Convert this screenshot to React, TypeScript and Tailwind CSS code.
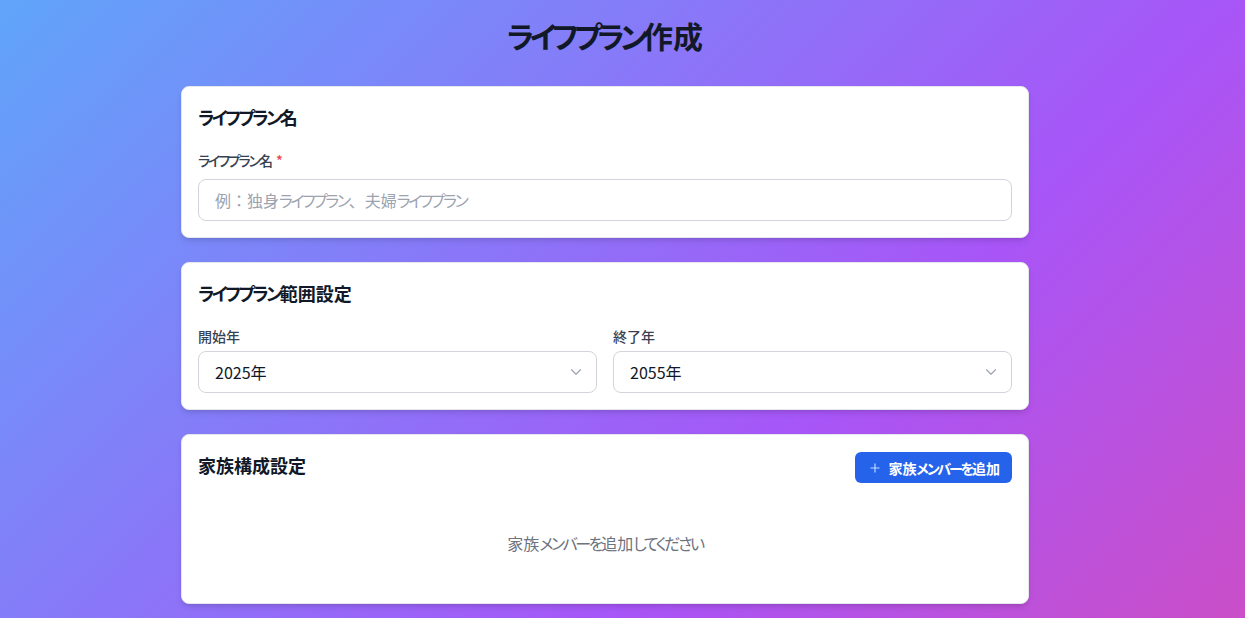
import React from "react";
import { ChevronDown, Plus } from "lucide-react";

const font = "font-['Noto_Sans_CJK_JP','Noto_Sans',sans-serif]";

function J({ t }: { t: string }) {
  const parts = t.split(/([\u3040-\u30FF]+)/);
  return (
    <>
      {parts.map((p, i) =>
        /[\u3040-\u30FF]/.test(p) ? (
          <span key={i} className="[font-feature-settings:'palt'] tracking-[-0.15em]">
            {p}
          </span>
        ) : (
          <React.Fragment key={i}>{p}</React.Fragment>
        )
      )}
    </>
  );
}

function Card({ children }: { children: React.ReactNode }) {
  return (
    <div className="rounded-lg border border-[#e5e7eb] bg-white p-4 shadow-md">
      {children}
    </div>
  );
}

function Select({ value }: { value: string }) {
  return (
    <div className="flex h-[42px] items-center justify-between rounded-lg border border-[#d1d5db] bg-white pl-4 pr-[11px]">
      <span className="text-base text-[#111827]">{value}</span>
      <ChevronDown size={18} strokeWidth={1.5} className="text-[#9ca3af]" />
    </div>
  );
}

export default function App() {
  return (
    <div
      className={`min-h-screen bg-[linear-gradient(to_bottom_right,#60a5fa,#a855f7,#ec4899)] bg-[length:100%_1236px] bg-no-repeat bg-[#a855f7] pr-[35px] pt-[17px] pb-6 ${font}`}
    >
      <div className="mx-auto max-w-[848px]">
        <h1 className="mb-[33px] text-center text-3xl font-bold leading-9 text-[#111827]">
          <J t="ライフプラン作成" />
        </h1>
        <div className="flex flex-col gap-6">
          <Card>
            <h2 className="mb-[19px] text-lg font-semibold leading-7 text-[#111827]">
              <J t="ライフプラン名" />
            </h2>
            <label className="mb-[9px] block text-sm font-medium leading-5 text-[#374151]">
              <J t="ライフプラン名" /> <span className="text-[#ef4444]">*</span>
            </label>
            <div className="flex h-[42px] items-center rounded-lg border border-[#d1d5db] px-4">
              <span className="text-base text-[#9ca3af]">
                <J t="例：独身ライフプラン、夫婦ライフプラン" />
              </span>
            </div>
          </Card>

          <Card>
            <h2 className="mb-[19px] text-lg font-semibold leading-7 text-[#111827]">
              <J t="ライフプラン範囲設定" />
            </h2>
            <div className="grid grid-cols-2 gap-4">
              <div>
                <label className="mb-[5px] block text-sm font-medium leading-5 text-[#374151]">
                  開始年
                </label>
                <Select value="2025年" />
              </div>
              <div>
                <label className="mb-[5px] block text-sm font-medium leading-5 text-[#374151]">
                  終了年
                </label>
                <Select value="2055年" />
              </div>
            </div>
          </Card>

          <Card>
            <div className="mb-4 flex items-start justify-between">
              <h2 className="text-lg font-semibold leading-7 text-[#111827]">
                家族構成設定
              </h2>
              <button className="mt-[1px] flex h-[31px] items-center gap-[6px] rounded-md bg-[#2563eb] pl-[13px] pr-3 text-sm font-semibold text-white">
                <Plus size={14} strokeWidth={2} className="text-[#bfdbfe]" />
                <span>
                  <J t="家族メンバーを追加" />
                </span>
              </button>
            </div>
            <div className="py-8 text-center text-base leading-6 text-[#6b7280]">
              <J t="家族メンバーを追加してください" />
            </div>
          </Card>
        </div>
      </div>
    </div>
  );
}
